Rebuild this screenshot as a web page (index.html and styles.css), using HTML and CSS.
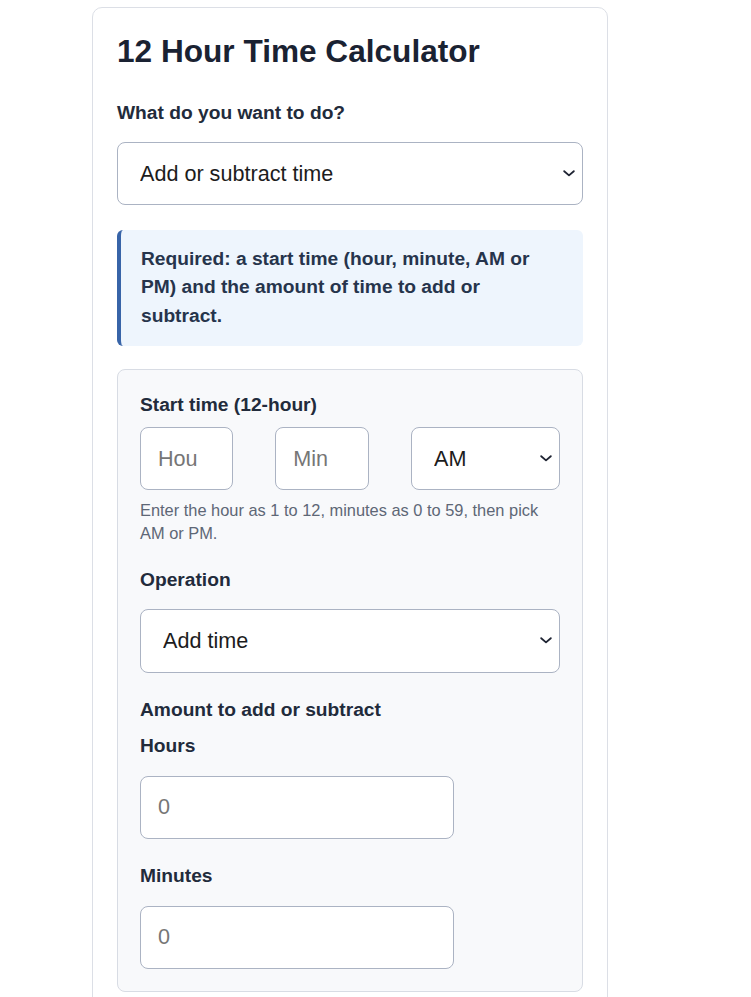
FILE: index.html
```html
<!DOCTYPE html>
<html lang="en">
<head>
<meta charset="utf-8">
<title>12 Hour Time Calculator</title>
<link rel="stylesheet" href="styles.css">
</head>
<body>
<div class="card">
  <h1 class="title">12 Hour Time Calculator</h1>
  <label class="label label-mode" for="mode">What do you want to do?</label>
  <select id="mode" class="control select select-wide">
    <option>Add or subtract time</option>
  </select>
  <div class="info">Required: a start time (hour, minute, AM or PM) and the amount of time to add or subtract.</div>
  <div class="panel">
    <div class="label label-start">Start time (12-hour)</div>
    <div class="time-row">
      <input class="control input input-hour" type="text" placeholder="Hour">
      <input class="control input input-min" type="text" placeholder="Min">
      <select class="control select select-ampm">
        <option>AM</option>
        <option>PM</option>
      </select>
    </div>
    <p class="hint">Enter the hour as 1 to 12, minutes as 0 to 59, then pick AM or PM.</p>
    <label class="label label-op" for="op">Operation</label>
    <select id="op" class="control select select-op">
      <option>Add time</option>
      <option>Subtract time</option>
    </select>
    <div class="label label-amount">Amount to add or subtract</div>
    <label class="label label-hours" for="hours">Hours</label>
    <input id="hours" class="control input input-amount input-hours" type="text" placeholder="0">
    <label class="label label-minutes" for="minutes">Minutes</label>
    <input id="minutes" class="control input input-amount" type="text" placeholder="0">
  </div>
</div>
</body>
</html>
```

FILE: styles.css
```css
html, body {
  margin: 0;
  padding: 0;
  background: #ffffff;
}

body {
  font-family: "Liberation Sans", Arial, sans-serif;
  color: #1f2937;
}

.card {
  box-sizing: border-box;
  width: 516px;
  margin: 7px 0 0 92px;
  padding: 25px 24px 40px 24px;
  border: 1px solid #dcdfe6;
  border-radius: 10px;
  min-height: 1100px;
  background: #ffffff;
}

.title {
  margin: 0 0 30.7px 0;
  font-size: 31.6px;
  line-height: 37.44px;
  font-weight: 700;
  color: #1a2232;
}

.label {
  display: block;
  font-size: 19.2px;
  line-height: 23px;
  font-weight: 700;
  color: #222b3b;
}

.label-mode { margin-bottom: 18px; }
.label-start { margin-bottom: 11.5px; }
.label-op { margin-top: 23.9px; margin-bottom: 18px; }
.label-amount { margin-top: 25.3px; }
.label-hours { margin-top: 13.6px; margin-bottom: 18.5px; }
.label-minutes { margin-top: 25.8px; margin-bottom: 18.5px; }

.control {
  box-sizing: border-box;
  display: block;
  margin: 0;
  height: 63px;
  border: 1px solid #abb3c3;
  border-radius: 8px;
  background-color: #ffffff;
  font-family: "Liberation Sans", Arial, sans-serif;
  font-size: 21.6px;
  color: #1c1c1c;
  outline: none;
}

.select {
  -webkit-appearance: none;
  appearance: none;
  padding: 0 34px 0 22px;
  background-image: url("data:image/svg+xml;utf8,<svg xmlns='http://www.w3.org/2000/svg' width='12' height='7' viewBox='0 0 12 7'><path d='M1.2 1.2 L6 5.4 L10.8 1.2' fill='none' stroke='%231f2433' stroke-width='1.8' stroke-linecap='round' stroke-linejoin='round'/></svg>");
  background-repeat: no-repeat;
  background-position: right 7px center;
  background-size: 12px 7px;
}

.select-wide {
  width: 100%;
  margin-bottom: 24.5px;
}

.input {
  padding: 0 10px 0 17px;
}

.input::placeholder {
  color: #767676;
}

.info {
  padding: 15px 20px;
  border-left: 4px solid #3864a8;
  border-radius: 6px;
  background: #eef5fd;
  font-size: 19.2px;
  line-height: 28.8px;
  font-weight: 700;
  color: #26344c;
  margin-bottom: 23px;
}

.panel {
  padding: 22.5px 22px 22px 22px;
  border: 1px solid #d8dce4;
  border-radius: 8px;
  background: #f8f9fb;
}

.time-row {
  display: flex;
  justify-content: space-between;
}

.input-hour { width: 93px; height: 63.4px; padding-right: 34px; }
.input-min { width: 93.5px; height: 63.4px; padding-right: 20px; }
.select-ampm { width: 149px; height: 63.4px; }

.hint {
  margin: 8.5px 0 0 0;
  font-size: 16.4px;
  line-height: 22.7px;
  color: #5e6776;
}

.select-op {
  width: 100%;
  height: 63.4px;
}

.input-amount {
  width: 314px;
}

.input-hours {
  height: 62.7px;
}
```
